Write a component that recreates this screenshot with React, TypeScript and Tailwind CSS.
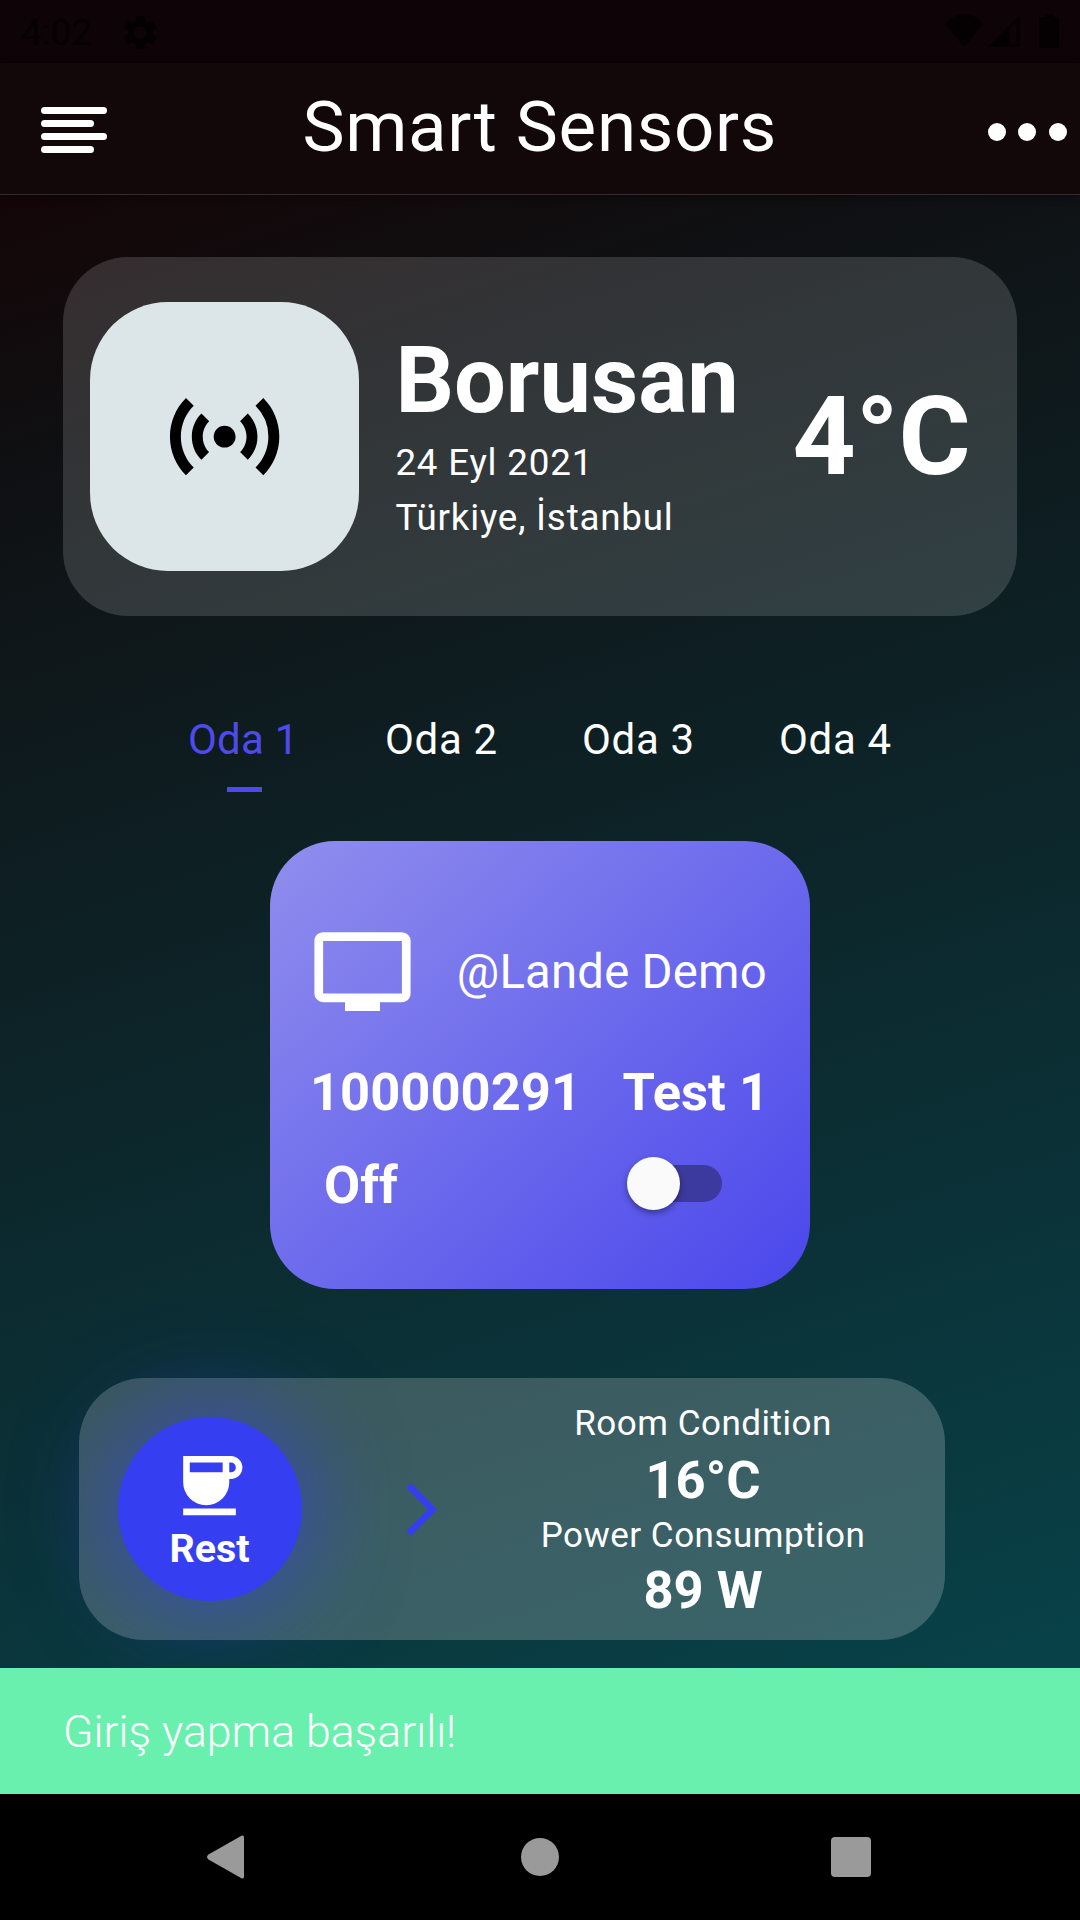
import React from "react";
import { MdSettings, MdSensors, MdPersonalVideo } from "react-icons/md";

const rooms = ["Oda 1", "Oda 2", "Oda 3", "Oda 4"];

function StatusBar() {
  return (
    <div className="flex h-[63px] items-start justify-between bg-[#0e0307] pl-[21px] pr-[20px] text-[#050103]">
      <div className="flex items-center">
        <span className="w-[99px] pt-[2px] text-[36.75px] leading-[62px]">4:02</span>
        <MdSettings className="h-[41px] w-[41px]" />
      </div>
      <svg className="mt-[12px] h-[38px] w-[116px]" viewBox="944 12 116 38" fill="currentColor">
        <path d="M945 24C956 11 973 11 983.500 24L964.300 47Z" />
        <path fillRule="evenodd" d="M987.500 47L1020 15V47ZM1010 28V44H1016.500V22Z" />
        <path d="M1045 14h9v3h3q2 0 2 2v27q0 2-2 2h-16q-2 0-2-2v-27q0-2 2-2h4z" />
      </svg>
    </div>
  );
}

function AppBar() {
  return (
    <header className="flex h-[132px] items-center justify-between border-b border-[#332d2f] bg-[#120709] pl-[40.5px] pr-[13px] shadow-[0_2px_8px_rgba(0,0,0,0.4)]">
      <div className="flex w-[235px] flex-col gap-[6px] pt-[3px]">
        <i className="h-[7px] w-[66px] rounded-full bg-white" />
        <i className="h-[7px] w-[53px] rounded-full bg-white" />
        <i className="h-[7px] w-[66px] rounded-full bg-white" />
        <i className="h-[7px] w-[53px] rounded-full bg-white" />
      </div>
      <h1 className="pb-[4px] text-[70.875px] leading-[83px] tracking-[0.7px]">Smart Sensors</h1>
      <div className="flex w-[263px] justify-end gap-[12.5px] pt-[7px]">
        <i className="size-[18px] rounded-full bg-white" />
        <i className="size-[18px] rounded-full bg-white" />
        <i className="size-[18px] rounded-full bg-white" />
      </div>
    </header>
  );
}

function LocationCard() {
  return (
    <section className="mx-[63px] mt-[62px] flex h-[359px] items-center rounded-[65px] bg-white/15 pl-[27.4px]">
      <div className="flex size-[269px] items-center justify-center rounded-[78px] bg-[#dce5e7] text-black">
        <MdSensors className="size-[131.25px]" />
      </div>
      <div className="ml-[36px] w-[397px] pb-[2px]">
        <h2 className="text-[91.875px] leading-[108px] font-bold">Borusan</h2>
        <p className="text-[36.75px] leading-[55px] tracking-[0.8px]">24 Eyl 2021</p>
        <p className="text-[36.75px] leading-[55px] tracking-[0.8px]">Türkiye, İstanbul</p>
      </div>
      <p className="text-[110.25px] leading-[129px] font-bold">4°C</p>
    </section>
  );
}

function RoomTabs() {
  return (
    <nav className="mt-[99px] ml-[188px] flex h-[126px] text-[42px] leading-[50px] tracking-[0.656px]">
      {rooms.map((room, i) => (
        <div key={room} className="flex w-[197px] flex-col">
          <span className={i === 0 ? "tracking-[0.2px] text-[#4e4aec]" : "text-white"}>{room}</span>
          {i === 0 && <i className="mt-[22px] ml-[39px] h-[5px] w-[35px] bg-[#4e4aec]" />}
        </div>
      ))}
    </nav>
  );
}

function DeviceCard() {
  return (
    <section className="mx-auto h-[448px] w-[540px] rounded-[65px] bg-[linear-gradient(138deg,#908eed_0%,#4a47ec_100%)] px-[40px] pt-[78px]">
      <div className="flex h-[105px] items-center justify-between pr-[3px]">
        <MdPersonalVideo className="size-[105px]" />
        <span className="text-[47.25px] leading-[56px] tracking-[0.25px]">@Lande Demo</span>
      </div>
      <div className="mt-[37px] flex justify-between pr-[1px] text-[52.5px] leading-[62px] font-bold">
        <span>100000291</span>
        <span>Test 1</span>
      </div>
      <div className="mt-[31px] flex h-[62px] items-center justify-between pr-[48px] pl-[14px]">
        <span className="text-[52.5px] leading-[62px] font-bold">Off</span>
        <div className="mb-[3px] flex h-[37px] w-[87px] items-center rounded-full bg-[#3c3a9e]">
          <i className="-ml-[8px] size-[53px] shrink-0 rounded-full bg-[#fafafa] shadow-[0_3px_6px_rgba(0,0,0,0.4)]" />
        </div>
      </div>
    </section>
  );
}

function ConditionCard() {
  return (
    <section className="mt-[89px] ml-[79px] flex h-[262px] w-[866px] items-center rounded-[65px] bg-white/20 pl-[39px]">
      <div className="flex size-[184px] flex-col items-center rounded-full bg-[#353ff1] pt-[29px] pr-[1px] shadow-[0_0_95px_7px_rgba(53,63,241,0.6)]">
        <svg className="size-[79px]" viewBox="0 0 24 24" fill="currentColor">
          <path
            fillRule="evenodd"
            d="M4 3h14.500C20.430 3 22 4.570 22 6.500S20.430 10 18.500 10H18v1a7 7 0 0 1-14 0zM6 5v3h10V5zM18 5v3h.5a1.500 1.500 0 0 0 0-3zM4 19h16v2H4z"
          />
        </svg>
        <span className="mt-[1px] text-[39.375px] leading-[46px] font-bold">Rest</span>
      </div>
      <svg className="ml-[88px] size-[63px] text-[#353ff1]" viewBox="0 0 24 24" fill="currentColor">
        <path d="M6.230 20.230 8 22l10-10L8 2 6.230 3.770 14.460 12z" />
      </svg>
      <div className="ml-[50px] flex w-[400px] flex-col items-center pt-[5px] text-center">
        <p className="text-[35px] leading-[47px] tracking-[0.5px]">Room Condition</p>
        <p className="text-[52.5px] leading-[67px] font-bold">16°C</p>
        <p className="text-[35px] leading-[43px] tracking-[0.5px]">Power Consumption</p>
        <p className="text-[52.5px] leading-[67px] font-bold">89 W</p>
      </div>
    </section>
  );
}

function Snackbar() {
  return (
    <div className="flex h-[126px] items-center bg-[#69f0ae] pt-[2px] pl-[63px] text-[44.625px] font-light">
      Giriş yapma başarılı!
    </div>
  );
}

function NavigationBar() {
  return (
    <footer className="flex h-[126px] items-center justify-between bg-black pr-[209px] pl-[207px] text-[#9a9a9a]">
      <svg className="h-[44px] w-[37px]" viewBox="0 0 37 44" fill="currentColor">
        <path d="M1.500 19.500 34 1q3-1.500 3 1.500v39q0 3-3 1.500L1.500 24.500q-3-2.500 0-5z" />
      </svg>
      <i className="ml-[4px] size-[38px] rounded-full bg-current" />
      <i className="size-[40px] rounded-[4px] bg-current" />
    </footer>
  );
}

export default function App() {
  return (
    <div className="flex h-[1920px] w-[1080px] flex-col overflow-hidden bg-[linear-gradient(162deg,#140608_200px,#0f0f11_430px,#0f1518_580px,#08434a_1950px)] font-['Roboto',sans-serif] text-white">
      <StatusBar />
      <AppBar />
      <main className="h-[1473px] overflow-hidden">
        <LocationCard />
        <RoomTabs />
        <DeviceCard />
        <ConditionCard />
      </main>
      <Snackbar />
      <NavigationBar />
    </div>
  );
}
